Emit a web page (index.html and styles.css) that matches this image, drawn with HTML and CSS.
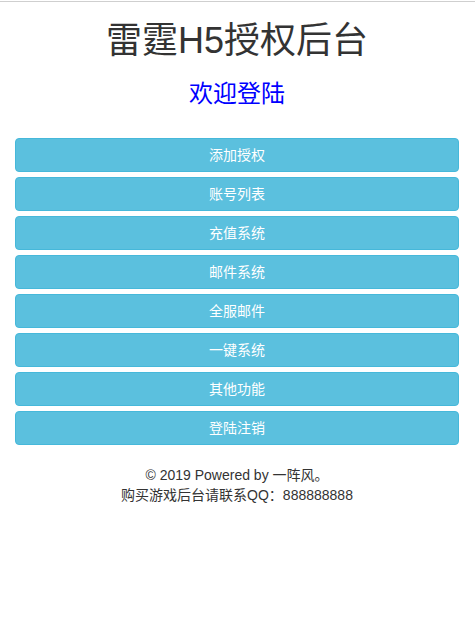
FILE: index.html
```html
<!DOCTYPE html>
<html lang="zh-CN">
<head>
<meta charset="utf-8">
<title>雷霆H5授权后台</title>
<link rel="stylesheet" href="styles.css">
</head>
<body>
<div class="topline"></div>
<div class="container">
  <h1 class="title">雷霆H5授权后台</h1>
  <h3 class="welcome">欢迎登陆</h3>
  <div class="menu">
    <a class="btn" href="#">添加授权</a>
    <a class="btn" href="#">账号列表</a>
    <a class="btn" href="#">充值系统</a>
    <a class="btn" href="#">邮件系统</a>
    <a class="btn" href="#">全服邮件</a>
    <a class="btn" href="#">一键系统</a>
    <a class="btn" href="#">其他功能</a>
    <a class="btn" href="#">登陆注销</a>
  </div>
  <footer class="footer">
    <p>© 2019 Powered by 一阵风。</p>
    <p>购买游戏后台请联系QQ：888888888</p>
  </footer>
</div>
</body>
</html>
```
FILE: styles.css
```css
* { box-sizing: border-box; }
html, body { margin: 0; padding: 0; background: #fff; }
body {
  font-family: "Liberation Sans", "Noto Sans CJK SC", sans-serif;
  font-size: 14px;
  line-height: 1.428571;
  color: #333;
}
.topline {
  height: 1px;
  margin-top: 1px;
  background: #cfcfcf;
}
.container {
  padding: 0 16px 0 15px;
}
.title {
  margin: 19px 0 0;
  font-size: 36px;
  font-weight: 400;
  line-height: 1.1;
  text-align: center;
  color: #333;
}
.welcome {
  margin: 20px 0 0;
  font-size: 24px;
  font-weight: 400;
  line-height: 1.1;
  text-align: center;
  color: #0000ff;
}
.menu {
  margin-top: 31px;
  display: flex;
  flex-direction: column;
  gap: 5px;
}
.btn {
  display: block;
  height: 34px;
  padding: 6px 12px;
  font-size: 14px;
  line-height: 20px;
  text-align: center;
  color: #fff;
  text-decoration: none;
  background: #5bc0de;
  border: 1px solid #46b8da;
  border-radius: 4px;
}
.footer {
  margin-top: 20px;
  text-align: center;
  color: #333;
}
.footer p { margin: 0; line-height: 20px; }
```
